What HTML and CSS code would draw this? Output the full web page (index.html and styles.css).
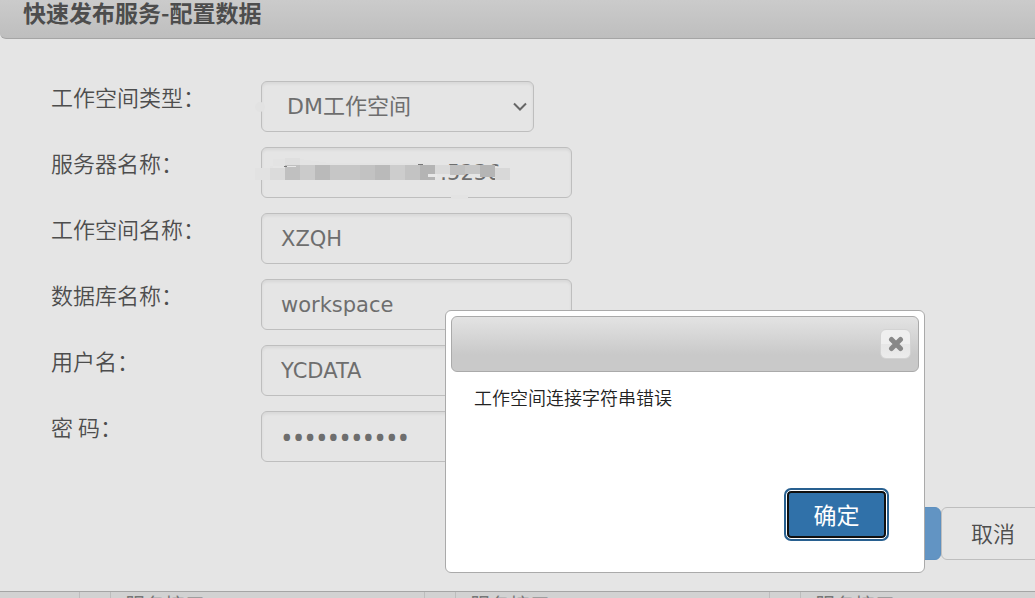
FILE: index.html
```html
<!DOCTYPE html>
<html lang="zh-CN">
<head>
    <meta charset="UTF-8">
    <meta name="viewport" content="width=device-width, initial-scale=1.0">
    <title>快速发布服务</title>
    <link rel="stylesheet" href="styles.css">
</head>
<body>
    <main class="panel">
        <h1 class="panel-title">快速发布服务-配置数据</h1>

        <form class="config-form">
            <div class="form-row">
                <label for="ws-type">工作空间类型：</label>
                <div class="select-wrap">
                    <select id="ws-type" class="field">
                        <option>DM工作空间</option>
                    </select>
                    <svg class="mask" width="12" height="51" viewBox="0 0 12 51"><circle cx="5" cy="26" r="5" fill="#e2e2e2"/></svg>
                    <svg class="chevron" width="16" height="10" viewBox="0 0 16 10" fill="none" stroke="#666" stroke-width="2"><path d="M2 1.5l6 6 6-6"/></svg>
                </div>
            </div>
            <div class="form-row">
                <label for="server">服务器名称：</label>
                <div class="input-wrap">
                    <input id="server" class="field server" type="text" value=":5236">
                    <!-- masked host address -->
                    <svg class="mask" width="256" height="52" viewBox="0 0 256 52" shape-rendering="crispEdges">
                        <path fill="#e3e3e3" d="M18 12h27l30 4h100v3h-160v2H18zM196 48h17v4h-17z"/>
                        <path fill="#dfdfdf" d="M30 11h15v7H30z"/>
                        <path fill="#e2e2e2" d="M0 21h15v12H0z"/>
                        <path fill="#dbdbdb" d="M15 21h15v12H15z"/>
                        <path fill="#c0c0c0" d="M30 18h15v15H30z"/>
                        <path fill="#cbcbcb" d="M45 18h15v15H45z"/>
                        <path fill="#bababa" d="M60 18h15v15H60z"/>
                        <path fill="#c6c6c6" d="M75 18h30v15H75z"/>
                        <path fill="#c2c2c2" d="M105 18h15v15h-15z"/>
                        <path fill="#bababa" d="M120 18h15v15h-15z"/>
                        <path fill="#cdcdcd" d="M135 18h15v15h-15z"/>
                        <path fill="#c3c3c3" d="M150 18h15v15h-15z"/>
                        <path fill="#b4b4b4" d="M165 18h15v15h-15z"/>
                        <path fill="#dadada" d="M180 18h15v9h-15z"/>
                        <path fill="#c0c0c0" d="M195 18h15v10h-15z"/>
                        <path fill="#c6c6c6" d="M210 18h15v9h-15z"/>
                        <path fill="#b5b5b5" d="M225 18h15v12h-15z"/>
                        <path fill="#d8d8d8" d="M240 21h15v12h-15z"/>
                        <path fill="#e8e8e8" d="M32 19h9v1h-9zM173 27h9v3h-9z"/>
                        <path fill="#777" d="M29 19h3v1h-3zM163 17h5v1h-5z"/>
                    </svg>
                </div>
            </div>
            <div class="form-row">
                <label for="ws-name">工作空间名称：</label>
                <div class="input-wrap"><input id="ws-name" class="field" type="text" value="XZQH"></div>
            </div>
            <div class="form-row">
                <label for="db-name">数据库名称：</label>
                <div class="input-wrap"><input id="db-name" class="field" type="text" value="workspace"></div>
            </div>
            <div class="form-row">
                <label for="user">用户名：</label>
                <div class="input-wrap"><input id="user" class="field" type="text" value="YCDATA"></div>
            </div>
            <div class="form-row">
                <label for="password">密 码：</label>
                <div class="input-wrap"><input id="password" class="field" type="password" value="12345678901"></div>
            </div>
            <div class="form-actions">
                <button type="button" class="btn btn-primary" aria-label="提交"></button>
                <button type="button" class="btn">取消</button>
            </div>
        </form>
    </main>

    <div class="service-list">
        <span class="cell cell-index"></span>
        <span class="cell cell-check"></span>
        <span class="cell cell-name">服务接口：rest</span>
        <span class="cell cell-check"></span>
        <span class="cell cell-name">服务接口：rest</span>
        <span class="cell cell-check"></span>
        <span class="cell cell-name cell-last">服务接口：rest</span>
    </div>

    <div class="dialog" role="alertdialog" aria-labelledby="dialog-message">
        <div class="dialog-header">
            <button type="button" class="dialog-close" aria-label="关闭">
                <svg width="16" height="16" viewBox="0 0 16 16" stroke="#888" stroke-width="5" stroke-linecap="round"><path d="M3.500 3.500l9 9M12.500 3.500l-9 9"/></svg>
            </button>
        </div>
        <p class="dialog-message" id="dialog-message">工作空间连接字符串错误</p>
        <div class="dialog-footer">
            <button type="button" class="dialog-ok">确定</button>
        </div>
    </div>
</body>
</html>
```
FILE: styles.css
```css
* {
    box-sizing: border-box;
}
body {
    margin: 0;
    height: 100vh;
    overflow: hidden;
    background-color: #e5e5e5;
    color: #4d4d4d;
    font-family: "Noto Sans CJK SC", sans-serif;
    font-size: 22px;
}
.panel-title {
    margin: 0;
    padding: 0 23px 14px;
    border-bottom: 1px solid #a5a5a5;
    border-radius: 0 0 0 6px;
    background: linear-gradient(#cbcbcb, #bebebe);
    font-size: 23px;
    line-height: 24px;
}
.config-form {
    padding: 42px 0 31px 51px;
}
.form-row {
    display: flex;
    align-items: flex-start;
    margin-bottom: 15px;
}
.form-row label {
    flex: none;
    width: 210px;
    font-weight: 350;
    line-height: 30px;
}
.input-wrap,
.select-wrap {
    position: relative;
    width: 311px;
}
.select-wrap {
    width: 273px;
}
.field {
    display: block;
    width: 100%;
    height: 51px;
    padding: 0 19px;
    border: 1px solid #bebebe;
    border-radius: 6px;
    outline: none;
    appearance: none;
    background-color: #e5e5e5;
    box-shadow: inset 0 2px 3px rgba(0, 0, 0, 0.06);
    color: #6e6e6e;
    font-family: "DejaVu Sans", "Noto Sans CJK SC", sans-serif;
    font-size: 21px;
}
select.field {
    padding-left: 25px;
    font-size: 22px;
}
.field[type="password"] {
    font-family: "Open Sans", sans-serif;
    font-size: 31px;
}
.server {
    padding-left: 178px;
}
.chevron {
    position: absolute;
    right: 6px;
    top: 21px;
}
.mask {
    position: absolute;
    left: -6px;
    top: 0;
}
.form-actions {
    display: flex;
    justify-content: flex-end;
    margin: 45px -10px 0 0;
}
.btn {
    width: 104px;
    height: 53px;
    padding: 0 0 3px;
    border: 1px solid #bebebe;
    border-radius: 6px;
    background-color: #e5e5e5;
    color: #4d4d4d;
    font-family: "Noto Sans CJK SC", sans-serif;
    font-size: 22px;
    font-weight: 350;
}
.btn-primary {
    border-color: #5e90bf;
    background-color: #6294c3;
}
.service-list {
    display: flex;
    border-top: 1px solid #a5a5a5;
    background-color: #d2d2d2;
    color: #777;
    font-size: 20px;
    line-height: 25px;
}
.cell {
    flex: none;
    border-right: 1px solid #bdbdbd;
}
.cell-index {
    width: 80px;
}
.cell-check {
    width: 31px;
}
.cell-name {
    width: 314px;
    padding-left: 14px;
}
.cell-last {
    flex: 1;
    border-right: none;
}
.dialog {
    position: absolute;
    left: 445px;
    top: 310px;
    width: 480px;
    padding: 5px;
    border: 1px solid #aaa;
    border-radius: 6px;
    background-color: #fff;
}
.dialog-header {
    display: flex;
    justify-content: flex-end;
    align-items: center;
    height: 56px;
    padding: 0 7px;
    border: 1px solid #aaa;
    border-radius: 6px;
    background: linear-gradient(#e3e3e3, #c9c9c9 70%);
}
.dialog-close {
    display: flex;
    align-items: center;
    justify-content: center;
    width: 31px;
    height: 30px;
    padding: 0;
    border: 1px solid #d3d3d3;
    border-radius: 6px;
    background: linear-gradient(#efefef 50%, #e6e6e6 50%, #ececec);
}
.dialog-message {
    margin: 0;
    padding: 12px 23px;
    color: #222;
    font-size: 18px;
    font-weight: 350;
    line-height: 26px;
}
.dialog-footer {
    display: flex;
    justify-content: flex-end;
    padding: 69px 33px 29px;
}
.dialog-ok {
    width: 99px;
    height: 47px;
    padding: 0 0 2px;
    border: 2px solid #101010;
    border-radius: 4px;
    outline: 1px solid #fff;
    box-shadow: 0 0 0 3px #286090;
    background-color: #3071a9;
    color: #fff;
    font-family: "Noto Sans CJK SC", sans-serif;
    font-size: 23px;
}
```
